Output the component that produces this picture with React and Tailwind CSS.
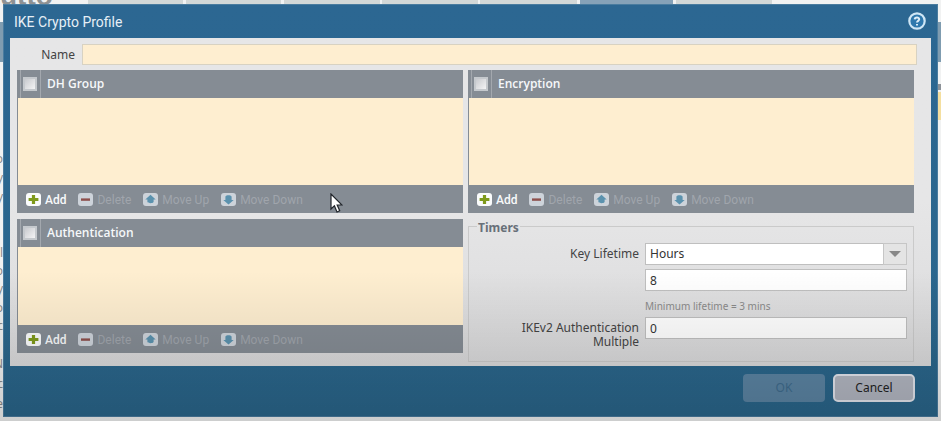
import { useId } from "react";

const ICONS = {
  add: <path d="M5.9 2h3.2v3h3.3v3H9.1v3H5.900V8H2.6V5h3.300z" fill="#7f9a1c" />,
  delete: <path d="M3 5.400h9v2.400H3z" fill="#8d4f4b" />,
  up: <path d="M7.5 1.8l5.2 4.6h-2.1v2.7c-1 1.600-5.200 1.600-6.200 0V6.400H2.300z" fill="#5b92ae" />,
  down: <path d="M7.5 11.6L2.3 7h2.1V3.600c1-1.800 5.200-1.800 6.200 0V7h2.100z" fill="#5b92ae" />,
};

function ToolButton({ icon, label, disabled }) {
  return (
    <button
      type="button"
      disabled={disabled}
      className={
        disabled
          ? "flex items-center gap-1 text-[#a0a5ac]"
          : "flex items-center gap-1 font-medium text-[#f8f9fa]"
      }
    >
      <svg width="15" height="13" viewBox="0 0 15 13" aria-hidden="true">
        <rect width="15" height="13" rx="3" fill={disabled ? "#cdd3da" : "#fbfcfc"} />
        {ICONS[icon]}
      </svg>
      {label}
    </button>
  );
}

function ListPanel({ title, listClass }) {
  const id = useId();
  return (
    <section className="bg-[#858c94]">
      <header className="flex h-7 items-stretch pl-[3px]">
        <span className="flex w-[21px] items-center border-x border-[#a3a8ae]">
          <input
            id={id}
            type="checkbox"
            className="ml-0.5 size-[14px] appearance-none border-2 border-[#c5c9cd] bg-gradient-to-br from-[#c8cace] to-[#f4f4f5]"
          />
        </span>
        <label
          htmlFor={id}
          className="flex items-center pl-1.5 font-['Open_Sans','Noto_Sans',sans-serif] font-semibold text-[#f6f8fa]"
        >
          {title}
        </label>
      </header>
      <div className={listClass} />
      <div className="flex h-7 items-center gap-3 pt-px pl-[9px] font-['Roboto',sans-serif]">
        <ToolButton icon="add" label="Add" />
        <ToolButton icon="delete" label="Delete" disabled />
        <ToolButton icon="up" label="Move Up" disabled />
        <ToolButton icon="down" label="Move Down" disabled />
      </div>
    </section>
  );
}

function Backdrop() {
  return (
    <div aria-hidden="true" className="absolute inset-0 overflow-hidden bg-[#f1f2f2]">
      <div className="flex h-[22px]">
        <div className="flex w-[88px] items-end overflow-hidden pb-3 font-['Liberation_Sans',sans-serif] text-[28px] font-bold leading-[28px] text-[#8f9294]">
          utto
        </div>
        <div className="w-[95px] bg-[#d3d8d7]" />
        <div className="ml-[3px] w-[95px] bg-[#d3d8d7]" />
        <div className="ml-[3px] w-[96px] bg-[#d3d8d7]" />
        <div className="ml-[2px] w-[96px] bg-[#d3d8d7]" />
        <div className="ml-[2px] w-[97px] bg-[#d3d8d7]" />
        <div className="ml-[3px] w-[93px] bg-[#86a2b8]" />
        <div className="ml-[3px] w-[96px] bg-[#d3d8d7]" />
      </div>
      <div className="h-[40px] bg-[#7f9cb0]" />
      <div className="ml-auto mt-[22px] h-[6px] w-1 bg-[#8d9298]" />
      <div className="ml-auto mt-[2px] h-[28px] w-1 bg-[#f4dfa0]" />
      <div className="flex w-[3px] flex-col items-end overflow-hidden pt-8 text-[#8a8a8a]">
        <span className="h-[19px]">o</span>
        <span className="h-[19px]">y</span>
        <span className="h-[56px]">y</span>
        <span className="h-[18px]">l</span>
        <span className="h-[18px]">o</span>
        <span className="h-[19px]">y</span>
        <span className="h-[18px]">o</span>
        <span className="h-[38px]">c</span>
        <span className="h-[20px]">N</span>
        <span className="h-[20px]">c</span>
        <span className="h-[20px]">e</span>
      </div>
    </div>
  );
}

const FIELD =
  "h-[22px] w-full min-w-0 border border-[#bfbfbf] bg-white px-1 text-[#333] outline-none";

export default function App() {
  return (
    <main className="relative min-h-screen px-[3px] pt-1 pb-1 font-['Noto_Sans',sans-serif] text-[12px] leading-[14px]">
      <Backdrop />
      <form
        className="relative border border-[#4a7c9f] bg-gradient-to-b from-[#2c6792] to-[#2a668b] px-1.5"
        onSubmit={(e) => e.preventDefault()}
      >
        <div className="flex h-[33px] items-center justify-between pr-[5px] pl-1">
          <h1 className="font-['Roboto',sans-serif] text-[14px] text-[#e6eff6]">IKE Crypto Profile</h1>
          <button type="button" aria-label="Help" className="mb-0.5 size-[18px]">
            <svg viewBox="0 0 18 18" width="18" height="18">
              <circle cx="9" cy="9" r="7.7" fill="#2f78ad" stroke="#cfe6f5" strokeWidth="2.2" />
              <path
                d="M6.700 7.300c.2-2.500 4.600-2.400 4.500 0-.1 1.500-2.100 1.600-2.200 3.200M9 11.900v1.700"
                fill="none"
                stroke="#dcecf7"
                strokeWidth="2"
              />
            </svg>
          </button>
        </div>

        <div className="bg-gradient-to-b from-[#e6e6e7] from-50% to-[#dadadb] pt-1.5 pr-[17px] pb-1 pl-[7px]">
          <div className="-mr-[3px] flex items-center">
            <label htmlFor="name" className="w-[65px] pr-[7px] text-right text-[#444]">
              Name
            </label>
            <input
              id="name"
              className="h-[21px] min-w-0 flex-1 border border-[#d8d2c2] bg-[#feeed0] px-1 outline-none"
            />
          </div>

          <div className="mt-[5px] grid grid-cols-2 gap-[5px]">
            <div className="flex flex-col gap-1.5">
              <ListPanel title="DH Group" listClass="ml-px h-[87px] bg-[#feeed0]" />
              <ListPanel title="Authentication" listClass="ml-px h-[78px] bg-[#feeed0]" />
            </div>
            <div className="flex flex-col gap-1">
              <ListPanel title="Encryption" listClass="ml-px h-[87px] bg-[#feeed0]" />
              <fieldset className="flex-1 border border-[#cacaca] pr-1.5 pb-3 pl-2">
                <legend className="px-px pt-1 font-bold text-[#687079]">Timers</legend>
                <div className="grid grid-cols-[162px_1fr] gap-x-1.5 pt-2 text-[#444]">
                  <label htmlFor="unit" className="pt-1 text-right">
                    Key Lifetime
                  </label>
                  <div className="relative">
                    <select id="unit" className={FIELD + " appearance-none"}>
                      <option>Hours</option>
                    </select>
                    <span className="pointer-events-none absolute inset-y-0 right-0 flex w-6 items-center justify-center border border-[#c6c6c6] bg-[#e4e4e4]">
                      <svg width="12" height="6" viewBox="0 0 12 6" aria-hidden="true">
                        <path d="M0 0h12L6 6z" fill="#888" />
                      </svg>
                    </span>
                  </div>
                  <input
                    aria-label="Key lifetime value"
                    defaultValue="8"
                    className={FIELD + " col-start-2 mt-1"}
                  />
                  <p className="col-start-2 mt-2 text-[10px] text-[#8a8a8a]">Minimum lifetime = 3 mins</p>
                  <label htmlFor="multiple" className="mt-1 pt-1 text-right">
                    IKEv2 Authentication Multiple
                  </label>
                  <input id="multiple" defaultValue="0" className={FIELD + " mt-1"} />
                </div>
              </fieldset>
            </div>
          </div>
        </div>

        <div className="flex h-[50px] items-start justify-end gap-2 pt-2 pr-4">
          <button type="button" disabled className="h-7 w-[82px] rounded bg-[#5b84a3] text-[#3f6c8e]">
            OK
          </button>
          <button
            type="button"
            className="h-7 w-[82px] rounded-[5px] border-2 border-[#e4e6ee] bg-[#b3b7c2] text-[#222]"
          >
            Cancel
          </button>
        </div>
      </form>
      <div className="pointer-events-none absolute inset-x-0 bottom-0 h-[150px] bg-gradient-to-b from-transparent to-black/15" />
      <svg
        className="pointer-events-none absolute top-[193px] left-[330px]"
        width="13"
        height="20"
        viewBox="0 0 13 20"
        aria-hidden="true"
      >
        <path d="M1 1v15l3.400-3.200L7 19l2.700-1.200L7.200 12H12z" fill="#fff" stroke="#20242a" strokeWidth="1.200" />
      </svg>
    </main>
  );
}
